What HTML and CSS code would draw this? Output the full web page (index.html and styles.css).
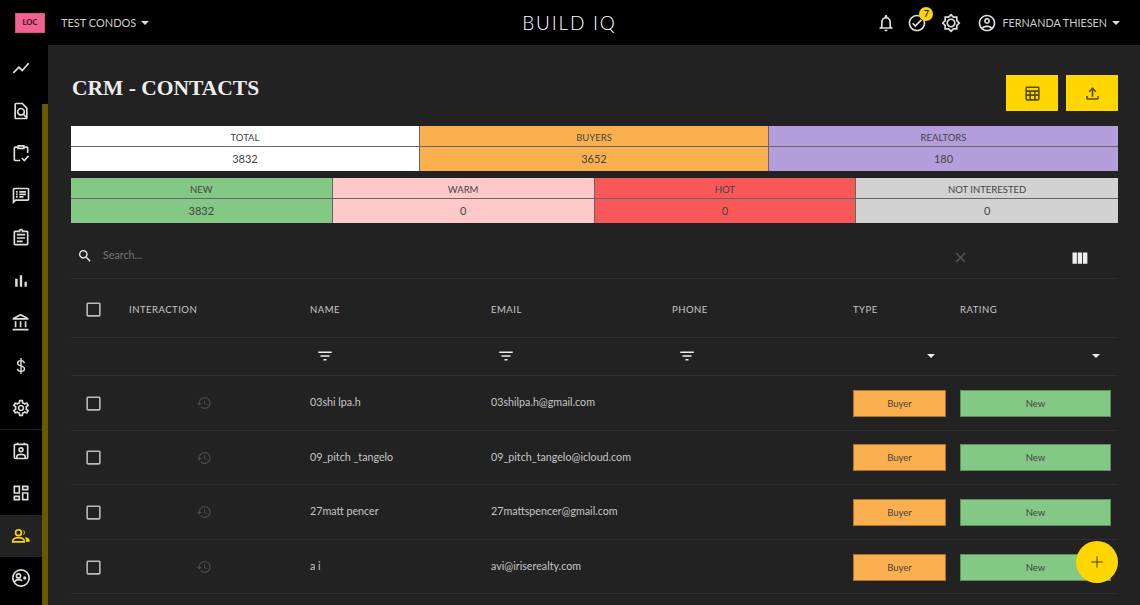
FILE: index.html
```html
<!DOCTYPE html>
<html lang="en">
<head>
<meta charset="utf-8">
<title>Build IQ - CRM Contacts</title>
<link rel="stylesheet" href="styles.css">
</head>
<body>
<svg class="defs" aria-hidden="true">
  <symbol id="i-box" viewBox="0 0 24 24"><path d="M19 5v14H5V5h14m0-2H5c-1.1 0-2 .9-2 2v14c0 1.1.9 2 2 2h14c1.1 0 2-.9 2-2V5c0-1.1-.9-2-2-2z"/></symbol>
  <symbol id="i-hist" viewBox="0 0 24 24"><path d="M13 3c-4.97 0-9 4.03-9 9H1l3.89 3.89.07.14L9 12H6c0-3.87 3.13-7 7-7s7 3.13 7 7-3.13 7-7 7c-1.93 0-3.68-.79-4.94-2.06l-1.42 1.42C8.27 19.99 10.51 21 13 21c4.97 0 9-4.03 9-9s-4.03-9-9-9zm-1 5v5l4.28 2.54.72-1.21-3.5-2.08V8H12z"/></symbol>
  <symbol id="i-filter" viewBox="0 0 24 24"><path d="M10 18h4v-2h-4v2zM3 6v2h18V6H3zm3 7h12v-2H6v2z"/></symbol>
</svg>

<header class="topbar">
  <div class="top-left">
    <span class="loc">LOC</span>
    <span class="project">TEST CONDOS</span>
    <span class="caret"></span>
  </div>
  <div class="brand">BUILD IQ</div>
  <div class="top-right">
    <svg class="ico" viewBox="0 0 24 24"><path d="M12 22c1.1 0 2-.9 2-2h-4c0 1.1.9 2 2 2zm6-6v-5c0-3.07-1.63-5.64-4.5-6.32V4c0-.83-.67-1.5-1.5-1.5s-1.5.67-1.5 1.5v.68C7.64 5.36 6 7.92 6 11v5l-2 2v1h16v-1l-2-2zm-2 1H8v-6c0-2.48 1.51-4.5 4-4.5s4 2.02 4 4.5v6z"/></svg>
    <span class="task">
      <svg class="ico" viewBox="0 0 24 24"><path d="M12 2C6.48 2 2 6.48 2 12s4.48 10 10 10 10-4.48 10-10S17.52 2 12 2zm0 18c-4.41 0-8-3.59-8-8s3.59-8 8-8 8 3.59 8 8-3.59 8-8 8zm4.59-12.42L10 14.17l-2.59-2.58L6 13l4 4 8-8z"/></svg>
      <span class="badge">7</span>
    </span>
    <svg class="ico" viewBox="0 0 24 24"><path d="M20 8.69V4h-4.69L12 .69 8.69 4H4v4.69L.69 12 4 15.31V20h4.69L12 23.31 15.31 20H20v-4.69L23.31 12 20 8.69zm-2 5.79V18h-3.52L12 20.48 9.52 18H6v-3.52L3.52 12 6 9.52V6h3.52L12 3.52 14.48 6H18v3.52L20.48 12 18 14.48zM12 6.5c-3.03 0-5.5 2.47-5.5 5.5s2.47 5.5 5.5 5.5 5.5-2.47 5.5-5.5-2.47-5.5-5.5-5.5zm0 9c-1.93 0-3.5-1.57-3.5-3.5s1.57-3.5 3.5-3.5 3.5 1.57 3.5 3.5-1.57 3.5-3.5 3.5z"/></svg>
    <span class="user">
      <svg class="ico" viewBox="0 0 24 24"><path d="M12 2C6.48 2 2 6.48 2 12s4.48 10 10 10 10-4.48 10-10S17.52 2 12 2zM7.35 18.5C8.66 17.56 10.26 17 12 17s3.34.56 4.65 1.5c-1.31.94-2.91 1.5-4.65 1.5s-3.34-.56-4.65-1.5zm10.79-1.38C16.45 15.8 14.32 15 12 15s-4.45.8-6.14 2.12C4.7 15.73 4 13.95 4 12c0-4.42 3.58-8 8-8s8 3.58 8 8c0 1.95-.7 3.73-1.86 5.12zM12 6c-1.93 0-3.5 1.57-3.5 3.5S10.07 13 12 13s3.5-1.57 3.5-3.5S13.93 6 12 6zm0 5c-.83 0-1.5-.67-1.5-1.5S11.17 8 12 8s1.5.67 1.5 1.5S12.83 11 12 11z"/></svg>
      <span class="user-name">FERNANDA THIESEN</span>
      <span class="caret"></span>
    </span>
  </div>
</header>

<div class="shell">
  <nav class="sidebar">
    <a class="nav-item"><svg class="ico" viewBox="0 0 24 24"><path d="M3.5 18.49l6-6.01 4 4L22 6.92l-1.41-1.41-7.09 7.97-4-4L2 16.99z"/></svg></a>
    <a class="nav-item"><svg class="ico" viewBox="0 0 24 24"><path d="M14 2H6c-1.1 0-1.99.9-1.99 2L4 20c0 1.1.89 2 1.99 2H18c1.1 0 2-.9 2-2V8l-6-6zM6 4h7l5 5v8.58l-1.84-1.84c1.28-1.94 1.07-4.57-.64-6.28C14.55 8.49 13.26 8 12 8c-1.26 0-2.55.49-3.53 1.46-1.95 1.95-1.95 5.11 0 7.05.97.97 2.25 1.46 3.53 1.46.96 0 1.92-.28 2.75-.83L17.6 20H6V4zm8.11 11.1c-.56.56-1.31.88-2.11.88s-1.55-.31-2.11-.88c-.56-.56-.88-1.31-.88-2.11s.31-1.55.88-2.11c.56-.57 1.31-.88 2.11-.88s1.55.31 2.11.88c.56.56.88 1.31.88 2.11s-.31 1.55-.88 2.11z"/></svg></a>
    <a class="nav-item"><svg class="ico line" viewBox="0 0 24 24"><path d="M16 5h3a1 1 0 0 1 1 1v6M8 5H5a1 1 0 0 0-1 1v14a1 1 0 0 0 1 1h6"/><path d="M8.500 3.500h7v3h-7z"/><path d="M13 18l3 3 5-5.500"/></svg></a>
    <a class="nav-item"><svg class="ico" viewBox="0 0 24 24"><path d="M20 2H4c-1.100 0-2 .9-2 2v18l4-4h14c1.100 0 2-.9 2-2V4c0-1.100-.9-2-2-2zm0 14H5.170L4 17.170V4h16v12zM6 6h2v2H6zm0 3h2v2H6zm0 3h2v2H6zm4-6h8v2h-8zm0 3h8v2h-8zm0 3h5v2h-5z"/></svg></a>
    <a class="nav-item"><svg class="ico" viewBox="0 0 24 24"><path d="M19 3h-4.180C14.400 1.840 13.300 1 12 1c-1.300 0-2.400.84-2.820 2H5c-1.100 0-2 .9-2 2v14c0 1.100.9 2 2 2h14c1.100 0 2-.9 2-2V5c0-1.100-.9-2-2-2zm-7 0c.55 0 1 .45 1 1s-.45 1-1 1-1-.45-1-1 .45-1 1-1zm7 16H5V5h14v14zM7 15h7v2H7zm0-4h10v2H7zm0-4h10v2H7z"/></svg></a>
    <a class="nav-item"><svg class="ico" viewBox="0 0 24 24"><path d="M5 9.200h3V19H5zM10.600 5h2.800v14h-2.800zm5.600 8H19v6h-2.800z"/></svg></a>
    <a class="nav-item"><svg class="ico" viewBox="0 0 24 24"><path d="M6.500 10h-2v7h2v-7zm6 0h-2v7h2v-7zm8.500 9H2v2h19v-2zm-2.500-9h-2v7h2v-7zm-7-6.740L16.710 6H6.290l5.210-2.740m0-2.260L2 6v2h19V6l-9.500-5z"/></svg></a>
    <a class="nav-item"><svg class="ico line dollar" viewBox="0 0 24 24"><path d="M16 8.500c-.3-2-1.800-3-4-3-2.400 0-4 1.200-4 3.100 0 2.100 2 2.800 4 3.300 2.200.6 4.200 1.300 4.200 3.500 0 2-1.700 3.100-4.200 3.100-2.300 0-4-1.100-4.200-3.200M12 2.500v19"/></svg></a>
    <a class="nav-item nav-split"><svg class="ico" viewBox="0 0 24 24"><path d="M19.430 12.980c.04-.32.07-.64.07-.98 0-.34-.03-.66-.07-.98l2.110-1.650c.19-.15.24-.42.12-.64l-2-3.460c-.09-.16-.26-.25-.44-.25-.06 0-.12.01-.17.03l-2.490 1c-.52-.4-1.080-.73-1.690-.98l-.38-2.650C14.460 2.180 14.250 2 14 2h-4c-.25 0-.46.18-.49.42l-.38 2.650c-.61.25-1.170.59-1.690.98l-2.490-1c-.06-.02-.12-.03-.18-.03-.17 0-.34.09-.43.25l-2 3.460c-.13.22-.07.49.12.64l2.110 1.650c-.04.32-.07.65-.07.98 0 .33.03.66.07.98l-2.110 1.650c-.19.15-.24.42-.12.64l2 3.460c.09.16.26.25.44.25.06 0 .12-.01.17-.03l2.490-1c.52.4 1.080.73 1.690.98l.38 2.650c.03.24.24.42.49.42h4c.25 0 .46-.18.49-.42l.38-2.650c.61-.25 1.170-.59 1.690-.98l2.490 1c.06.02.12.03.18.03.17 0 .34-.09.43-.25l2-3.460c.12-.22.07-.49-.12-.64l-2.110-1.650zm-1.980-1.710c.04.31.05.52.05.73 0 .21-.02.43-.05.73l-.14 1.130.89.7 1.080.84-.7 1.210-1.270-.51-1.040-.42-.9.68c-.43.32-.84.56-1.250.73l-1.060.43-.16 1.130-.2 1.350h-1.400l-.19-1.350-.16-1.130-1.060-.43c-.43-.18-.83-.41-1.230-.71l-.91-.7-1.060.43-1.270.51-.7-1.210 1.080-.84.89-.7-.14-1.130c-.03-.31-.05-.54-.05-.74s.02-.43.05-.73l.14-1.130-.89-.7-1.080-.84.7-1.210 1.270.51 1.040.42.9-.68c.43-.32.84-.56 1.250-.73l1.060-.43.16-1.130.2-1.350h1.390l.19 1.350.16 1.130 1.060.43c.43.18.83.41 1.230.71l.91.7 1.060-.43 1.270-.51.7 1.210-1.070.85-.89.7.14 1.130zM12 8c-2.210 0-4 1.790-4 4s1.790 4 4 4 4-1.790 4-4-1.790-4-4-4zm0 6c-1.100 0-2-.9-2-2s.9-2 2-2 2 .9 2 2-.9 2-2 2z"/></svg></a>
    <a class="nav-item"><svg class="ico line" viewBox="0 0 24 24"><rect x="4" y="4" width="16" height="17" rx="1.500"/><path d="M8 2v2M16 2v2"/><circle cx="12" cy="10.500" r="2.300"/><path d="M7 21v-2.500c0-1.500 2.500-2.500 5-2.500s5 1 5 2.500V21"/></svg></a>
    <a class="nav-item"><svg class="ico" viewBox="0 0 24 24"><path d="M19 5v2h-4V5h4M9 5v6H5V5h4m10 8v6h-4v-6h4M9 17v2H5v-2h4M21 3h-8v6h8V3zM11 3H3v10h8V3zm10 8h-8v10h8V11zm-10 4H3v6h8v-6z"/></svg></a>
    <a class="nav-item nav-active"><svg class="ico line" viewBox="0 0 24 24"><circle cx="9" cy="8" r="3.500"/><path d="M2 19v-1c0-2.500 3.500-4 7-4s7 1.500 7 4v1z"/><path class="solid" d="M14 4.600a3.500 3.500 0 0 1 0 6.800c1-1 1.500-2.200 1.500-3.400S15 5.600 14 4.600zM18 13.500c2.500.6 4.500 2 4.500 4v1.500H18v-1.500c0-1.500-.5-2.800-1.500-3.700z"/></svg></a>
    <a class="nav-item"><svg class="ico line" viewBox="0 0 24 24"><circle cx="12" cy="12" r="9.800"/><circle cx="9" cy="9.500" r="2.500"/><path d="M4 17c1-2 3-3 5-3s3.500.6 4.500 1.500"/><circle class="solid" cx="16.500" cy="12" r="2"/></svg></a>
  </nav>
  <div class="track"><div class="track-thumb"></div></div>

  <main class="main">
    <div class="page-head">
      <h1 class="title">CRM - CONTACTS</h1>
      <div class="actions">
        <button class="action"><svg class="ico" viewBox="0 0 24 24"><path d="M5 3h14c1.100 0 2 .9 2 2v14c0 1.100-.9 2-2 2H5c-1.100 0-2-.9-2-2V5c0-1.100.9-2 2-2zm0 2v3h14V5H5zm0 5v3h3v-3H5zm5 0v3h4v-3h-4zm6 0v3h3v-3h-3zM5 15v4h3v-4H5zm5 0v4h4v-4h-4zm6 0v4h3v-4h-3z"/></svg></button>
        <button class="action"><svg class="ico" viewBox="0 0 24 24"><path d="M18 15v3H6v-3H4v3c0 1.100.9 2 2 2h12c1.100 0 2-.9 2-2v-3h-2zM7 9l1.410 1.410L11 7.830V16h2V7.830l2.590 2.580L17 9l-5-5-5 5z"/></svg></button>
      </div>
    </div>

    <section class="stats stats-3">
      <div class="stat c-white"><div class="stat-label">TOTAL</div><div class="stat-value">3832</div></div>
      <div class="stat c-orange"><div class="stat-label">BUYERS</div><div class="stat-value">3652</div></div>
      <div class="stat c-purple"><div class="stat-label">REALTORS</div><div class="stat-value">180</div></div>
    </section>
    <section class="stats stats-4">
      <div class="stat c-green"><div class="stat-label">NEW</div><div class="stat-value">3832</div></div>
      <div class="stat c-pink"><div class="stat-label">WARM</div><div class="stat-value">0</div></div>
      <div class="stat c-red"><div class="stat-label">HOT</div><div class="stat-value">0</div></div>
      <div class="stat c-grey"><div class="stat-label">NOT INTERESTED</div><div class="stat-value">0</div></div>
    </section>

    <div class="searchbar">
      <svg class="ico search-ico" viewBox="0 0 24 24"><path d="M15.500 14h-.79l-.28-.27C15.410 12.590 16 11.110 16 9.500 16 5.910 13.090 3 9.500 3S3 5.910 3 9.500 5.910 16 9.500 16c1.610 0 3.090-.59 4.230-1.570l.27.28v.79l5 4.990L20.490 19l-4.990-5zm-6 0C7.010 14 5 11.990 5 9.500S7.010 5 9.500 5 14 7.010 14 9.500 11.990 14 9.500 14z"/></svg>
      <span class="placeholder">Search...</span>
      <svg class="ico clear-ico" viewBox="0 0 24 24"><path d="M19 6.410L17.590 5 12 10.590 6.410 5 5 6.410 10.590 12 5 17.590 6.410 19 12 13.410 17.590 19 19 17.590 13.410 12 19 6.410z"/></svg>
      <svg class="ico cols-ico" viewBox="0 0 24 24"><path d="M10 18h5V5h-5v13zm-6 0h5V5H4v13zM16 5v13h5V5h-5z"/></svg>
    </div>

    <div class="row head-row">
      <div class="cell-check"><svg class="ico check"><use href="#i-box"/></svg></div>
      <div>INTERACTION</div><div>NAME</div><div>EMAIL</div><div>PHONE</div><div>TYPE</div><div>RATING</div>
    </div>
    <div class="row filter-row">
      <div></div><div></div>
      <div class="f-cell"><svg class="ico filter"><use href="#i-filter"/></svg></div>
      <div class="f-cell"><svg class="ico filter"><use href="#i-filter"/></svg></div>
      <div class="f-cell"><svg class="ico filter"><use href="#i-filter"/></svg></div>
      <div class="drop-cell drop-type"><span class="caret small"></span></div>
      <div class="drop-cell"><span class="caret small"></span></div>
    </div>

    <div class="row data-row">
      <div class="cell-check"><svg class="ico check"><use href="#i-box"/></svg></div>
      <div class="hist-cell"><svg class="ico hist"><use href="#i-hist"/></svg></div>
      <div class="txt">03shi lpa.h</div><div class="txt">03shilpa.h@gmail.com</div><div></div>
      <div><span class="chip chip-buyer">Buyer</span></div><div><span class="chip chip-new">New</span></div>
    </div>
    <div class="row data-row">
      <div class="cell-check"><svg class="ico check"><use href="#i-box"/></svg></div>
      <div class="hist-cell"><svg class="ico hist"><use href="#i-hist"/></svg></div>
      <div class="txt">09_pitch _tangelo</div><div class="txt">09_pitch_tangelo@icloud.com</div><div></div>
      <div><span class="chip chip-buyer">Buyer</span></div><div><span class="chip chip-new">New</span></div>
    </div>
    <div class="row data-row">
      <div class="cell-check"><svg class="ico check"><use href="#i-box"/></svg></div>
      <div class="hist-cell"><svg class="ico hist"><use href="#i-hist"/></svg></div>
      <div class="txt">27matt pencer</div><div class="txt">27mattspencer@gmail.com</div><div></div>
      <div><span class="chip chip-buyer">Buyer</span></div><div><span class="chip chip-new">New</span></div>
    </div>
    <div class="row data-row">
      <div class="cell-check"><svg class="ico check"><use href="#i-box"/></svg></div>
      <div class="hist-cell"><svg class="ico hist"><use href="#i-hist"/></svg></div>
      <div class="txt">a i</div><div class="txt">avi@iriserealty.com</div><div></div>
      <div><span class="chip chip-buyer">Buyer</span></div><div><span class="chip chip-new">New</span></div>
    </div>
  </main>
</div>

<button class="fab"><svg class="ico" viewBox="0 0 24 24"><path d="M19 12.600h-6.400V19h-1.200v-6.400H5v-1.200h6.400V5h1.200v6.400H19z"/></svg></button>
</body>
</html>
```

FILE: styles.css
```css
* { box-sizing: border-box; }
html, body { margin: 0; height: 605px; overflow: hidden; }
body { background: #222; color: #ccc; font-family: Lato, "Noto Sans", sans-serif; font-size: 12px; position: relative; }
.defs { width: 0; height: 0; position: absolute; }
.ico { width: 24px; height: 24px; fill: currentColor; display: block; flex: none; }
.ico.line { fill: none; stroke: currentColor; stroke-width: 2; }
.ico.line .solid { fill: currentColor; stroke: none; }
.ico.dollar { stroke-width: 1.700; }

.topbar { height: 45px; background: #000; display: grid; grid-template-columns: 1fr auto 1fr; align-items: center; padding: 0 20px 0 15px; color: #ccc; }
.top-left { display: flex; align-items: center; }
.loc { width: 30px; height: 20px; background: #f06292; color: #4a0f22; font-size: 7.500px; font-weight: 900; display: flex; align-items: center; justify-content: center; border: 1px solid #d84f80; }
.project { margin-left: 16px; font-size: 11px; color: #ccc; }
.caret { width: 0; height: 0; border-left: 4.500px solid transparent; border-right: 4.500px solid transparent; border-top: 4.500px solid #ddd; margin-left: 5px; display: block; }
.caret.small { border-left-width: 4px; border-right-width: 4px; border-top-width: 4px; margin: 0; border-top-color: #eee; }
.brand { font-size: 19px; letter-spacing: 1.800px; color: #fff; font-weight: 300; margin-left: 4px; }
.top-right { display: flex; align-items: center; justify-content: flex-end; gap: 12px; }
.top-right .ico { width: 20px; height: 20px; color: #ddd; }
.task { position: relative; display: block; margin: 0 2px 0 -1px; }
.badge { position: absolute; top: -6px; right: -6px; width: 14px; height: 14px; border-radius: 50%; background: #ffd600; color: #222; font-size: 9px; font-weight: 700; display: flex; align-items: center; justify-content: center; }
.user { display: flex; align-items: center; margin-left: 4px; }
.user-name { margin-left: 5px; font-size: 10.800px; color: #ccc; }

.shell { display: flex; height: 560px; }
.sidebar { width: 42px; background: #000; padding-top: 2px; flex: none; }
.nav-item { height: 42.500px; display: flex; align-items: center; justify-content: center; color: #ddd; }
.nav-item .ico { width: 20px; height: 20px; }
.nav-split { border-bottom: 1px solid #222; }
.nav-active { background: #222; color: #ffd600; }
.track { width: 6px; background: #000; padding-top: 59px; flex: none; }
.track-thumb { height: 100%; background: #6b5900; }

.main { flex: 1; padding: 30px 22px 0 23px; min-width: 0; }
.page-head { display: flex; justify-content: space-between; height: 36px; margin-bottom: 15px; }
.title { margin: 0 0 0 1px; font: 700 21.500px/26px "Liberation Serif", serif; color: #eee; }
.actions { display: flex; gap: 8px; }
.action { width: 52px; height: 36px; background: #ffd600; border: 0; padding: 0; display: flex; align-items: center; justify-content: center; color: #5a4c00; }
.action .ico { width: 19px; height: 19px; }

.stats { display: grid; height: 45px; margin-bottom: 7px; }
.stats-3 { grid-template-columns: repeat(3, 1fr); }
.stats-4 { grid-template-columns: repeat(4, 1fr); margin-bottom: 11px; }
.stat { text-align: center; color: #444; border-right: 1px solid #666; }
.stat:last-child { border-right: 0; }
.stat-label { height: 20.500px; line-height: 23px; font-size: 9.500px; border-bottom: 1px solid #666; }
.stat-value { height: 24.500px; line-height: 23px; font-size: 11px; }
.c-white { background: #fff; }
.c-orange { background: #fbb04f; }
.c-purple { background: #b39ddb; }
.c-green { background: #83c884; }
.c-pink { background: #ffc9c9; }
.c-red { background: #f95858; }
.c-grey { background: #d2d2d2; }

.searchbar { height: 45px; display: flex; align-items: center; border-bottom: 1px solid #2e2e2e; padding-left: 6px; }
.search-ico { width: 16px; height: 16px; color: #eee; }
.placeholder { margin: 0 0 3px 10px; color: #777; font-size: 10.700px; }
.clear-ico { width: 17px; height: 17px; color: #555; margin-left: auto; margin-right: 100px; margin-top: 2px; }
.cols-ico { width: 21px; height: 21px; color: #eee; margin-right: 28px; margin-top: 4px; }

.row { display: grid; grid-template-columns: 58px 181px 181px 181px 181px 107px 158px; align-items: center; border-bottom: 1px solid #2e2e2e; }
.cell-check { padding-left: 13px; }
.check { width: 19px !important; height: 19px !important; color: #bbb; }
.head-row { height: 59px; padding-top: 3px; font-size: 9.500px; letter-spacing: .5px; color: #c8c8c8; }
.filter-row { height: 38px; padding-bottom: 2px; }
.f-cell { display: flex; padding-left: 6px; }
.filter { width: 18px; height: 18px; color: #eee; }
.drop-cell { display: flex; justify-content: flex-end; padding-right: 18px; }
.drop-type { padding-right: 25px; }
.data-row { height: 54.600px; padding-top: 1px; font-size: 10.700px; color: #c6c6c6; }
.txt { padding-bottom: 3px; }
.hist-cell { display: flex; padding-left: 67px; }
.hist { width: 16px; height: 16px; color: #484848; }
.chip { display: flex; align-items: center; justify-content: center; height: 27px; font-size: 9.500px; color: #444; }
.chip-buyer { width: 93px; background: #fbb04f; border: 1px solid #a87430; }
.chip-new { width: 151px; background: #83c884; border: 1px solid #5c8f5d; }

.fab { position: absolute; left: 1076px; top: 541px; width: 42px; height: 42px; border-radius: 50%; background: #ffd600; border: 0; padding: 0; display: flex; align-items: center; justify-content: center; color: #4a3f00; }
.fab .ico { width: 20px; height: 20px; }
```
